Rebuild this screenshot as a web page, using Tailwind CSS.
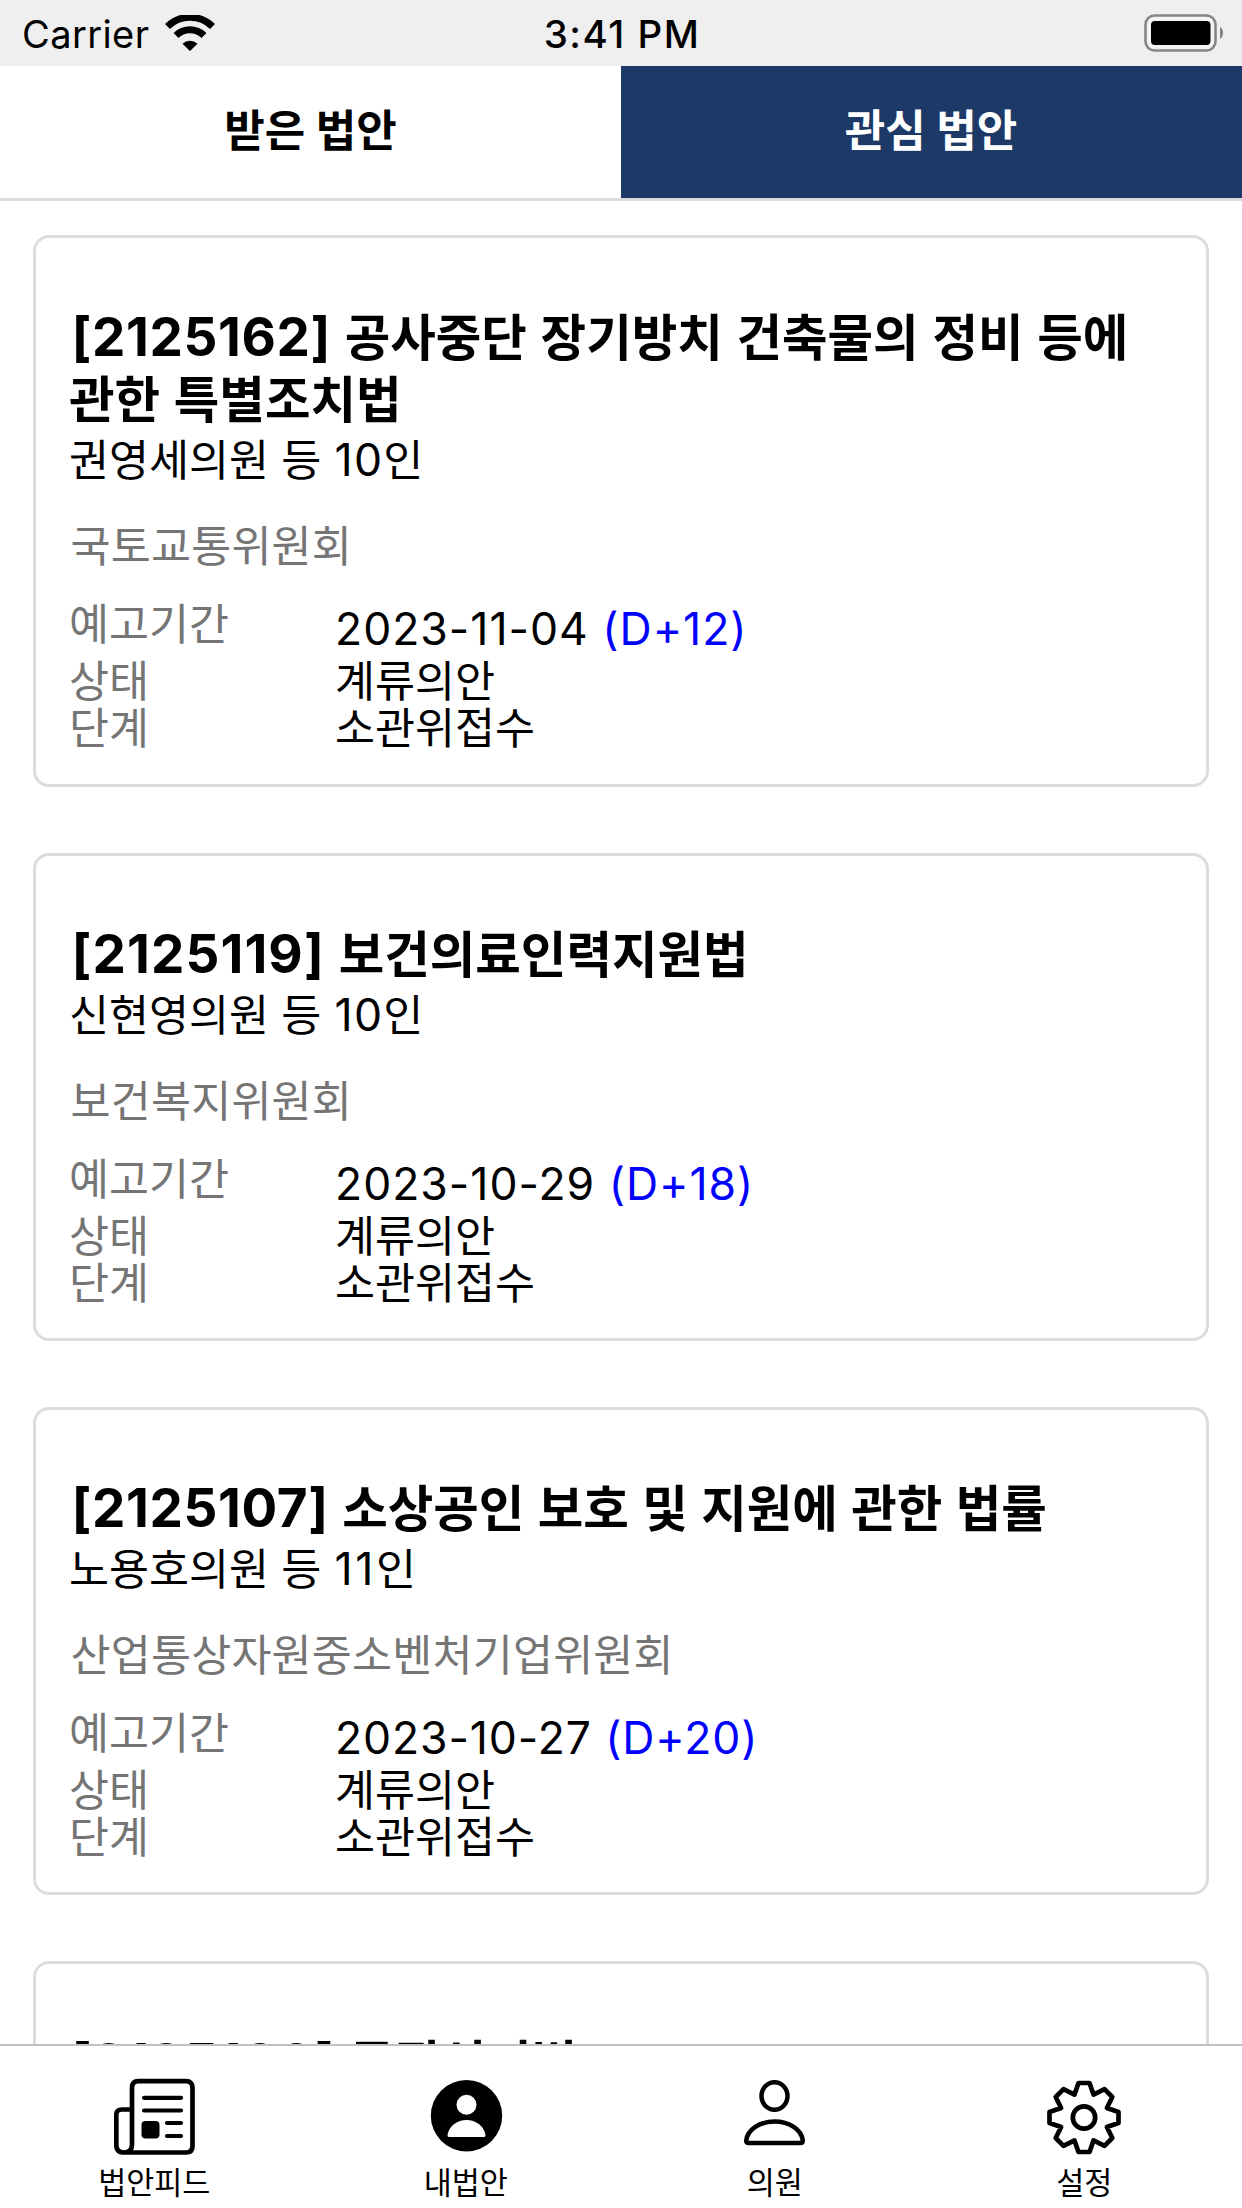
<!DOCTYPE html>
<html lang="ko">
  <head>
    <meta charset="UTF-8" />
    <meta name="viewport" content="width=device-width, initial-scale=1.0" />
    <title>관심 법안</title>
    <script src="https://cdn.jsdelivr.net/npm/@tailwindcss/browser@4"></script>
  </head>
  <body class="flex flex-col w-[1242px] h-[2208px] overflow-hidden bg-white text-black font-[Inter,'Noto_Sans_CJK_KR',sans-serif]">
    <!-- Status bar -->
    <header class="grid grid-cols-3 items-center h-[66px] shrink-0 bg-[#efefef] leading-none">
      <div class="flex items-center gap-[16px] pl-[22px]">
        <span class="pt-[2px] text-[38px] tracking-[0.4px]">Carrier</span>
        <svg class="w-[50px] h-[36px]" viewBox="0 0 50 36" fill="none" stroke="#000">
          <path d="M2.5 11.5a32 32 0 0 1 45 0" stroke-width="7" />
          <path d="M11 20.5a20 20 0 0 1 28 0" stroke-width="7" />
          <path d="M25 36l-7.5-7.3a10.8 10.8 0 0 1 15 0z" fill="#000" stroke="none" />
        </svg>
      </div>
      <p class="pt-[2px] pl-[2px] text-center text-[38.5px] font-medium tracking-[1.5px]">3:41 PM</p>
      <div class="flex justify-end pr-[17px]">
        <svg class="w-[81px] h-[38px]" viewBox="0 0 81 38">
          <rect x="1.5" y="1.5" width="70" height="35" rx="9" fill="#f4f4f4" stroke="#868686" stroke-width="2.6" />
          <rect x="7" y="7" width="59.5" height="24" rx="4" />
          <path d="M76 13c4 1.5 4 10.5 0 12z" fill="#868686" />
        </svg>
      </div>
    </header>

    <!-- Tabs -->
    <nav class="grid grid-cols-2 h-[135px] shrink-0 border-b-3 border-[#dcdcdc] text-[44px] leading-[130px] font-bold text-center">
      <a href="#">받은 법안</a>
      <a href="#" class="pr-px bg-[#1c3967] text-white">관심 법안</a>
    </nav>

    <!-- Bill list -->
    <main class="flex-1 min-h-0 overflow-hidden flex flex-col gap-[66px] px-[33px] pt-[34px]">
      <article class="shrink-0 h-[552px] border-3 border-[#dcdcdc] rounded-[16px] px-[33px] pt-[69px]">
        <h2 class="text-[49.5px] leading-[62px] font-bold [word-spacing:2px]"><span class="ml-[2.5px] text-[53px] leading-none tracking-[0.6px]">[2125162]</span> 공사중단 장기방치 건축물의 정비 등에<br />관한 특별조치법</h2>
        <p class="text-[43.5px] leading-[58px]">권영세의원 등 <span class="ml-px text-[44.5px] leading-none tracking-[1.2px]">10</span>인</p>
        <p class="mt-[28px] pl-[1.5px] text-[43.5px] leading-[58px] tracking-[0.2px] text-[#757575]">국토교통위원회</p>
        <dl class="mt-[26px] grid grid-cols-[266px_1fr] text-[43.5px] leading-[46.5px]">
          <dt class="h-[57px] text-[#757575]">예고기간</dt>
          <dd class="pt-[5px] text-[44.5px] tracking-[1px]">2023-11-04 <span class="text-[#0000ff]">(D+12)</span></dd>
          <dt class="text-[#757575]">상태</dt>
          <dd>계류의안</dd>
          <dt class="text-[#757575]">단계</dt>
          <dd>소관위접수</dd>
        </dl>
      </article>

      <article class="shrink-0 h-[488px] border-3 border-[#dcdcdc] rounded-[16px] px-[33px] pt-[68px]">
        <h2 class="text-[49.5px] leading-[62px] font-bold [word-spacing:2px]"><span class="ml-[2.5px] text-[53px] leading-none tracking-[1.1px]">[2125119]</span> 보건의료인력지원법</h2>
        <p class="text-[43.5px] leading-[58px]">신현영의원 등 <span class="ml-px text-[44.5px] leading-none tracking-[1.2px]">10</span>인</p>
        <p class="mt-[28px] pl-[1.5px] text-[43.5px] leading-[58px] tracking-[0.2px] text-[#757575]">보건복지위원회</p>
        <dl class="mt-[26px] grid grid-cols-[266px_1fr] text-[43.5px] leading-[46.5px]">
          <dt class="h-[57px] text-[#757575]">예고기간</dt>
          <dd class="pt-[5px] text-[44.5px] tracking-[1px]">2023-10-29 <span class="text-[#0000ff]">(D+18)</span></dd>
          <dt class="text-[#757575]">상태</dt>
          <dd>계류의안</dd>
          <dt class="text-[#757575]">단계</dt>
          <dd>소관위접수</dd>
        </dl>
      </article>

      <article class="shrink-0 h-[488px] border-3 border-[#dcdcdc] rounded-[16px] px-[33px] pt-[68px]">
        <h2 class="text-[49.5px] leading-[62px] font-bold [word-spacing:1.7px]"><span class="ml-[2.5px] text-[53px] leading-none tracking-[0.6px]">[2125107]</span> 소상공인 보호 및 지원에 관한 법률</h2>
        <p class="text-[43.5px] leading-[58px]">노용호의원 등 <span class="ml-px text-[44.5px] leading-none tracking-[2.6px]">11</span>인</p>
        <p class="mt-[28px] pl-[1.5px] text-[43.5px] leading-[58px] tracking-[0.2px] text-[#757575]">산업통상자원중소벤처기업위원회</p>
        <dl class="mt-[26px] grid grid-cols-[266px_1fr] text-[43.5px] leading-[46.5px]">
          <dt class="h-[57px] text-[#757575]">예고기간</dt>
          <dd class="pt-[5px] text-[44.5px] tracking-[0.9px]">2023-10-27 <span class="text-[#0000ff]">(D+20)</span></dd>
          <dt class="text-[#757575]">상태</dt>
          <dd>계류의안</dd>
          <dt class="text-[#757575]">단계</dt>
          <dd>소관위접수</dd>
        </dl>
      </article>

      <article class="shrink-0 h-[488px] border-3 border-[#dcdcdc] rounded-[16px] px-[33px] pt-[69px]">
        <h2 class="text-[49.5px] leading-[62px] font-bold [word-spacing:2px]"><span class="ml-[2.5px] text-[53px] leading-none tracking-[0.7px]">[2125100]</span> 공직선거법</h2>
      </article>
    </main>

    <!-- Bottom navigation -->
    <footer class="grid grid-cols-4 h-[164px] shrink-0 border-t-2 border-[#c2c2c2] pt-[30px] text-[30.5px] leading-[44px]">
      <a href="#" class="flex flex-col items-center gap-[5px]">
        <svg class="w-[82px] h-[80px]" viewBox="0 -3 82 80" fill="none" stroke="#000" stroke-width="4.7" stroke-linecap="round" stroke-linejoin="round">
          <path d="M10 73.5H72q6.5 0 6.5-6.5V8.7q0-6.5-6.5-6.5H24.5q-6.5 0-6.5 6.5V65.5q0 8-8 8t-7.7-8V36q0-5.5 5.5-5.5H18" />
          <path d="M30 18.8H67M30 31.5H67M53 44H67M53 57H67" stroke-width="4.2" />
          <rect x="27.5" y="42" width="18" height="17.5" rx="4" fill="#000" stroke="none" />
        </svg>
        <span class="mr-[2px]">법안피드</span>
      </a>
      <a href="#" class="flex flex-col items-center gap-[5px]">
        <svg class="w-[80px] h-[80px]" viewBox="0 0 80 80">
          <circle cx="40.5" cy="39.7" r="35.7" />
          <circle cx="40.5" cy="28.7" r="10" fill="#fff" />
          <path d="M23 61q-1.7 0-1.5-2a19.2 17.5 0 0 1 38 0q.2 2-1.5 2z" fill="#fff" />
        </svg>
        <span>내법안</span>
      </a>
      <a href="#" class="mr-[3px] flex flex-col items-center gap-[5px]">
        <svg class="w-[80px] h-[80px]" viewBox="0.5 -0.5 80 80" fill="none" stroke="#000" stroke-width="4.5" stroke-linejoin="round">
          <ellipse cx="40" cy="19.5" rx="13" ry="13.8" />
          <path d="M14 66.5q-2.5 0-2.3-2.5a28.4 20.8 0 0 1 56.6 0q.2 2.5-2.3 2.5z" />
        </svg>
        <span>의원</span>
      </a>
      <a href="#" class="mr-[5px] flex flex-col items-center gap-[5px]">
        <svg class="w-[80px] h-[80px]" viewBox="-40 -41.5 80 80" fill="none" stroke="#000" stroke-width="4.7" stroke-linejoin="round">
          <path d="M-5.5-34.5H5.5L9.5-22.9 20.5-28.3 28.3-20.5 22.9-9.5 34.5-5.5V5.5L22.9 9.5 28.3 20.5 20.5 28.3 9.5 22.9 5.5 34.5H-5.5L-9.5 22.9-20.5 28.3-28.3 20.5-22.9 9.5-34.5 5.5V-5.5L-22.9-9.5-28.3-20.5-20.5-28.3-9.5-22.9z" />
          <circle r="11.2" />
        </svg>
        <span>설정</span>
      </a>
    </footer>
  </body>
</html>
